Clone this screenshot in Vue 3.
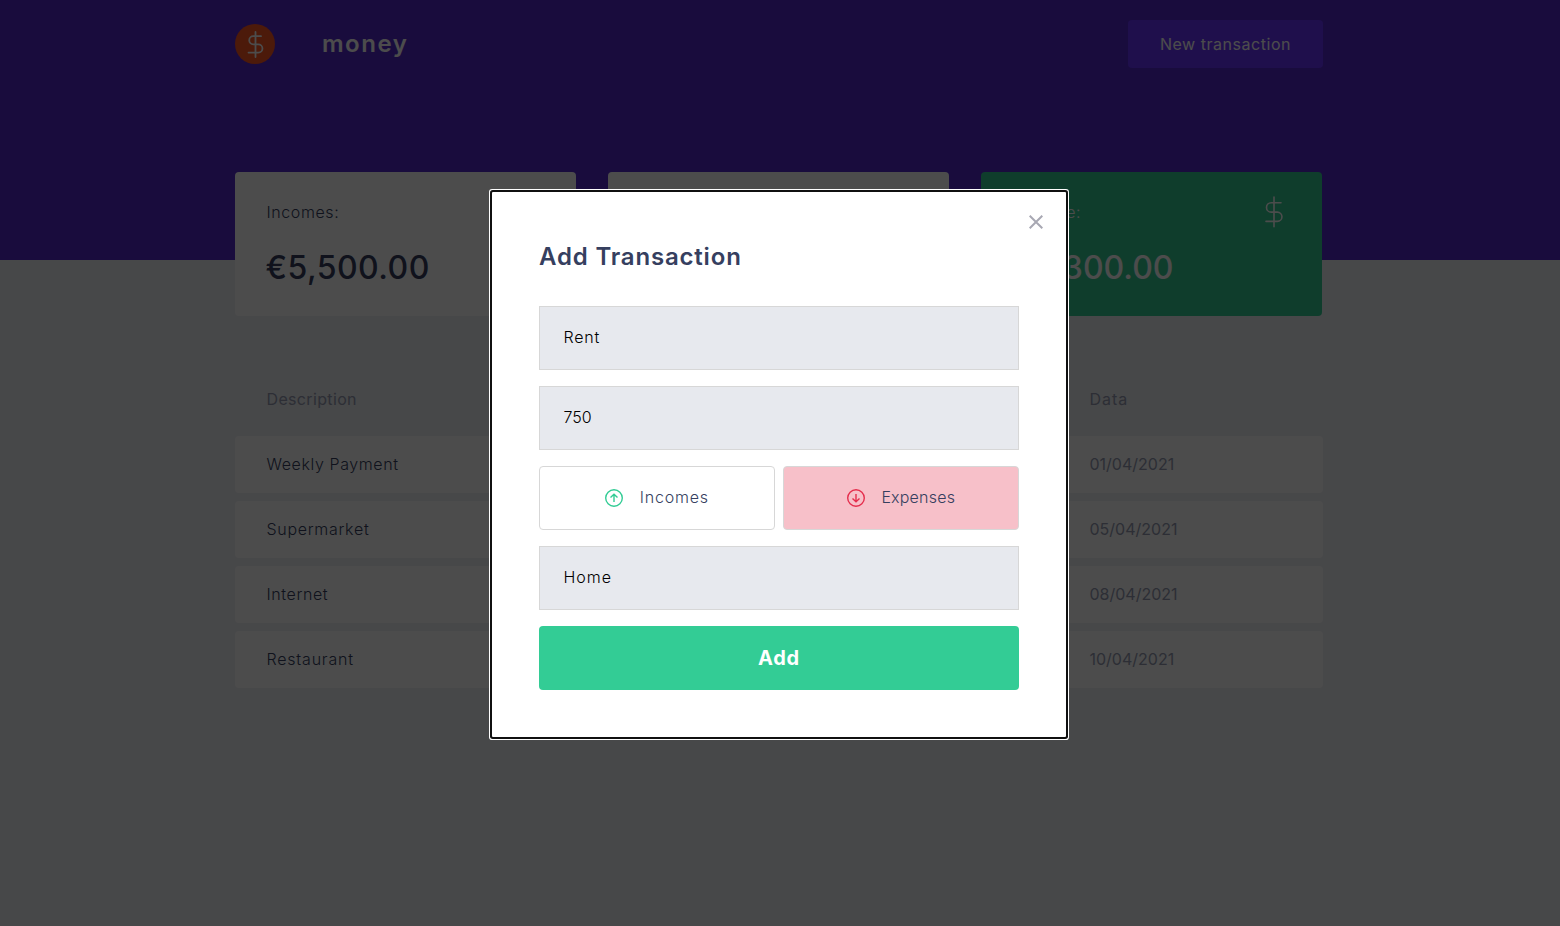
<script setup>
const rows = [
  { name: 'Weekly Payment', cls: 'w1', date: '01/04/2021', dc: 'd1' },
  { name: 'Supermarket', cls: 'w2', date: '05/04/2021', dc: 'd2' },
  { name: 'Internet', cls: 'w3', date: '08/04/2021', dc: 'd2' },
  { name: 'Restaurant', cls: 'w4', date: '10/04/2021', dc: 'd1' },
]
</script>

<template>
  <div class="page">
    <header class="header">
      <div class="bar">
        <div class="brand">
          <svg class="logo" width="40" height="40" viewBox="0 0 40 40" fill="none">
            <circle cx="20" cy="20" r="20" fill="#ff5722" />
            <path d="M20.5 8v25M26 12.2h-7.7a4 4 0 0 0 0 8.1h5a4.1 4.1 0 0 1 0 8.3H13.5" stroke="#fff" stroke-width="1.8" stroke-linecap="round" />
          </svg>
          <span class="wordmark">money</span>
        </div>
        <button class="new"><span>New transaction</span></button>
      </div>
    </header>
    <main class="main">
      <section class="summary">
        <div class="card">
          <div class="top"><span class="label">Incomes:</span></div>
          <strong>€5,500.00</strong>
        </div>
        <div class="card"></div>
        <div class="card green">
          <div class="top">
            <span class="label">Balance:</span>
            <svg width="32" height="32" viewBox="0 0 32 32" fill="none" stroke="#fff" stroke-width="1.6" stroke-linecap="round">
              <path d="M17 1v29.8M24 6.7h-9.8a4.7 4.7 0 0 0 0 9.4h6.1a4.65 4.65 0 0 1 0 9.3H9" />
            </svg>
          </div>
          <strong>€4,300.00</strong>
        </div>
      </section>
      <section class="table">
        <div class="row head"><span class="w0">Description</span><span class="date d0">Data</span></div>
        <div v-for="r in rows" :key="r.name" class="row item">
          <span :class="r.cls">{{ r.name }}</span><span class="date" :class="r.dc">{{ r.date }}</span>
        </div>
      </section>
    </main>
    <div class="overlay">
      <form class="modal" @submit.prevent>
        <button type="button" class="close" aria-label="Close">
          <svg width="14" height="14" viewBox="0 0 14 14" stroke="#a8a8b3" stroke-width="2"><path d="M.7.7l12.6 12.6M13.3.7L.7 13.3" /></svg>
        </button>
        <h2><span>Add Transaction</span></h2>
        <div class="field"><span class="rent">Rent</span></div>
        <div class="field"><span class="amount">750</span></div>
        <div class="types">
          <button type="button" class="type">
            <svg width="18" height="18" viewBox="0 0 18 18" fill="none" stroke="#33cc95" stroke-width="1.4"><circle cx="9" cy="9" r="8.3" /><path d="M9 13V5.7M5.5 8.6L9 5.2l3.5 3.4" /></svg>
            <span class="inc">Incomes</span>
          </button>
          <button type="button" class="type active">
            <svg width="18" height="18" viewBox="0 0 18 18" fill="none" stroke="#e52e4d" stroke-width="1.4"><circle cx="9" cy="9" r="8.3" /><path d="M9 5v7.3M5.5 9.4L9 12.8l3.5-3.4" /></svg>
            <span class="exp">Expenses</span>
          </button>
        </div>
        <div class="field"><span class="home">Home</span></div>
        <button class="add"><span>Add</span></button>
      </form>
    </div>
  </div>
</template>

<style>
body { margin: 0; overflow: hidden; }
</style>

<style scoped>
* { box-sizing: border-box; }
.page { position: relative; height: 926px; overflow: hidden; background: #eef0f4; color: #363f5f; font: 300 16px/24px Inter, "Open Sans", sans-serif; }
button { border: 0; font: inherit; padding: 0; }
span { white-space: nowrap; }
.header { height: 260px; background: #5429cc; }
.bar { width: 1088px; margin-left: 235px; padding-top: 20px; display: flex; justify-content: space-between; align-items: flex-start; }
.brand { display: flex; align-items: center; height: 48px; }
.wordmark { margin-left: 47px; color: #fff; font-size: 24px; font-weight: 600; line-height: 36px; letter-spacing: 1.5px; }
.new { width: 195px; height: 48px; border-radius: 4px; background: #6933ff; color: #fff; font-weight: 400; letter-spacing: .54px; }
.main { width: 1088px; margin: -88px 0 0 235px; }
.summary { display: grid; grid-template-columns: repeat(3, 341px); gap: 32px; }
.card { height: 144px; padding: 24px 31.5px; border-radius: 4px; background: #fff; }
.top { display: flex; justify-content: space-between; height: 32px; align-items: center; }
.label { letter-spacing: .6px; }
.card strong { display: block; margin: 16px 0 0 -1px; font-size: 32px; line-height: 48px; font-weight: 500; letter-spacing: .45px; }
.card svg { margin-right: 1.5px; }
.green { background: #33cc95; color: #fff; }
.green strong { letter-spacing: 0; margin-left: 0; }
.table { margin-top: 64px; display: grid; gap: 8px; }
.row { display: grid; grid-template-columns: 823px 1fr; align-items: center; height: 57px; padding: 0 31.5px 2px; border-radius: 4px; }
.head { height: 48px; padding-bottom: 10px; color: #969cb3; font-weight: 400; }
.item { background: #fff; }
.date { color: #969cb3; font-weight: 400; }
.w0 { letter-spacing: .35px; }
.d0 { letter-spacing: 1px; }
.w1 { letter-spacing: .6px; }
.w2 { letter-spacing: .7px; }
.w3 { letter-spacing: .6px; }
.w4 { letter-spacing: .8px; }
.overlay { position: absolute; inset: 0; background: rgba(0, 0, 0, .7); }
.modal { position: absolute; left: 492px; top: 192px; width: 574px; height: 545px; padding: 47px; background: #fff; border-radius: 1px; box-shadow: 0 0 0 2px #101010, 0 0 0 3px #fff; }
.close { position: absolute; right: 23px; top: 23px; width: 14px; height: 14px; background: none; display: flex; }
h2 { margin: 0 0 31px; font-size: 24px; line-height: 36px; font-weight: 600; letter-spacing: .82px; }
.field { height: 64px; margin-bottom: 16px; padding: 0 23.5px 2px; display: flex; align-items: center; border: 1px solid #d7d7d7; background: #e7e9ee; color: #000; }
.rent { letter-spacing: .8px; }
.home { letter-spacing: 1px; }
.types { display: grid; grid-template-columns: 1fr 1fr; gap: 8px; margin-bottom: 16px; }
.type { height: 64px; display: flex; align-items: center; justify-content: center; gap: 16.5px; border: 1px solid #d7d7d7; border-radius: 4px; background: #fff; color: #363f5f; }
.type span { margin-top: -2px; }
.inc { letter-spacing: .8px; }
.exp { letter-spacing: .2px; }
.active { background: #f7c0c9; }
.add { width: 100%; height: 64px; border-radius: 4px; background: #33cc95; color: #fff; font-size: 20px; font-weight: 700; letter-spacing: .7px; }
</style>
